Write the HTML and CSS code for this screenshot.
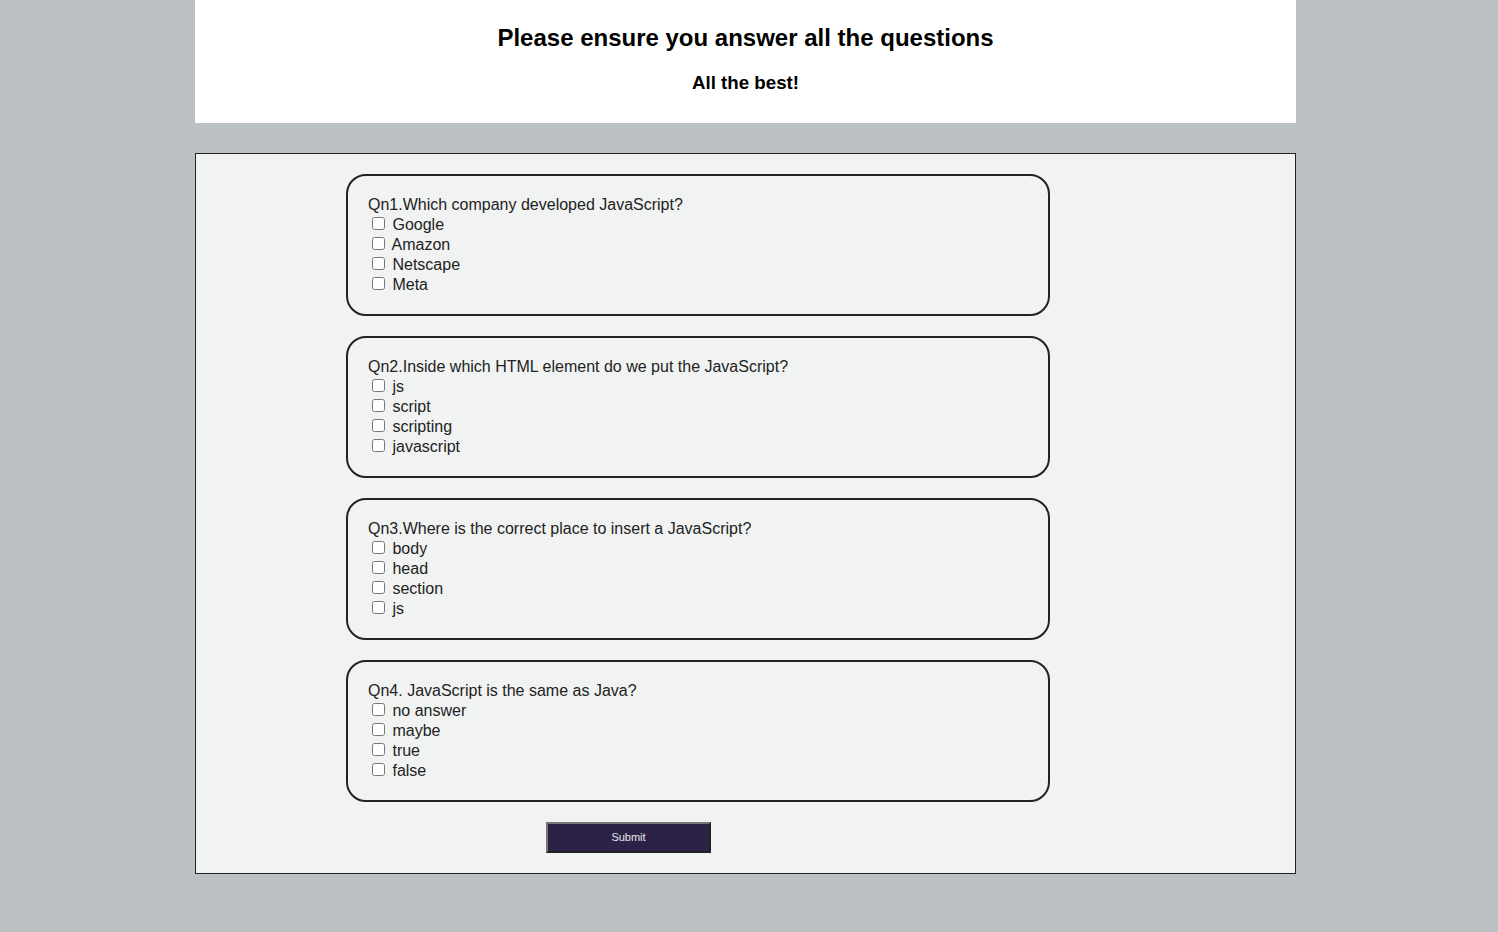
FILE: index.html
```html
<!DOCTYPE html>
<html lang="en">
<head>
<meta charset="utf-8">
<title>Quiz</title>
<link rel="stylesheet" href="styles.css">
</head>
<body>
<header class="header">
  <h2 class="title">Please ensure you answer all the questions</h2>
  <h3 class="subtitle">All the best!</h3>
</header>
<form class="quiz">
  <div class="card">
    <div class="q">Qn1.Which company developed JavaScript?</div>
    <label class="opt"><input type="checkbox"> Google</label>
    <label class="opt"><input type="checkbox"> Amazon</label>
    <label class="opt"><input type="checkbox"> Netscape</label>
    <label class="opt"><input type="checkbox"> Meta</label>
  </div>
  <div class="card">
    <div class="q">Qn2.Inside which HTML element do we put the JavaScript?</div>
    <label class="opt"><input type="checkbox"> js</label>
    <label class="opt"><input type="checkbox"> script</label>
    <label class="opt"><input type="checkbox"> scripting</label>
    <label class="opt"><input type="checkbox"> javascript</label>
  </div>
  <div class="card">
    <div class="q">Qn3.Where is the correct place to insert a JavaScript?</div>
    <label class="opt"><input type="checkbox"> body</label>
    <label class="opt"><input type="checkbox"> head</label>
    <label class="opt"><input type="checkbox"> section</label>
    <label class="opt"><input type="checkbox"> js</label>
  </div>
  <div class="card">
    <div class="q">Qn4. JavaScript is the same as Java?</div>
    <label class="opt"><input type="checkbox"> no answer</label>
    <label class="opt"><input type="checkbox"> maybe</label>
    <label class="opt"><input type="checkbox"> true</label>
    <label class="opt"><input type="checkbox"> false</label>
  </div>
  <div class="actions">
    <button type="button" class="submit">Submit</button>
  </div>
</form>
</body>
</html>
```
FILE: styles.css
```css
html, body {
  margin: 0;
  padding: 0;
}
body {
  background: #bbc0c3;
  font-family: "Liberation Sans", Arial, sans-serif;
  min-height: 932px;
}
.header {
  width: 1101px;
  margin: 0 0 0 195px;
  background: #ffffff;
  text-align: center;
  padding: 24px 0 0;
  box-sizing: border-box;
  height: 123px;
}
.title {
  margin: 0;
  font-size: 24px;
  font-weight: bold;
  line-height: 28px;
  color: #000;
}
.subtitle {
  margin: 20px 0 0;
  font-size: 18.72px;
  font-weight: bold;
  line-height: 22px;
  color: #000;
}
.quiz {
  width: 1101px;
  box-sizing: border-box;
  margin: 30px 0 0 195px;
  background: #f1f3f2;
  border: 1px solid #222;
  padding: 20px 0 20px 150px;
  display: flex;
  flex-direction: column;
  gap: 20px;
}
.card {
  width: 704px;
  box-sizing: border-box;
  border: 2px solid #222;
  border-radius: 20px;
  padding: 19px 20px 19px;
  color: #222;
  font-size: 16px;
  line-height: 20px;
  display: flex;
  flex-direction: column;
}
.opt {
  display: block;
  height: 20px;
}
.opt input {
  margin: 0 3px 0 4px;
  width: 13px;
  height: 13px;
  vertical-align: 0;
}
.actions {
  padding-left: 200px;
  height: 31px;
}
.submit {
  width: 165px;
  height: 31px;
  background: #2c2248;
  color: #e6e6ee;
  border: 2px outset #767676;
  font-family: "Liberation Sans", Arial, sans-serif;
  font-size: 11px;
  padding: 0 0 2px;
}
```
